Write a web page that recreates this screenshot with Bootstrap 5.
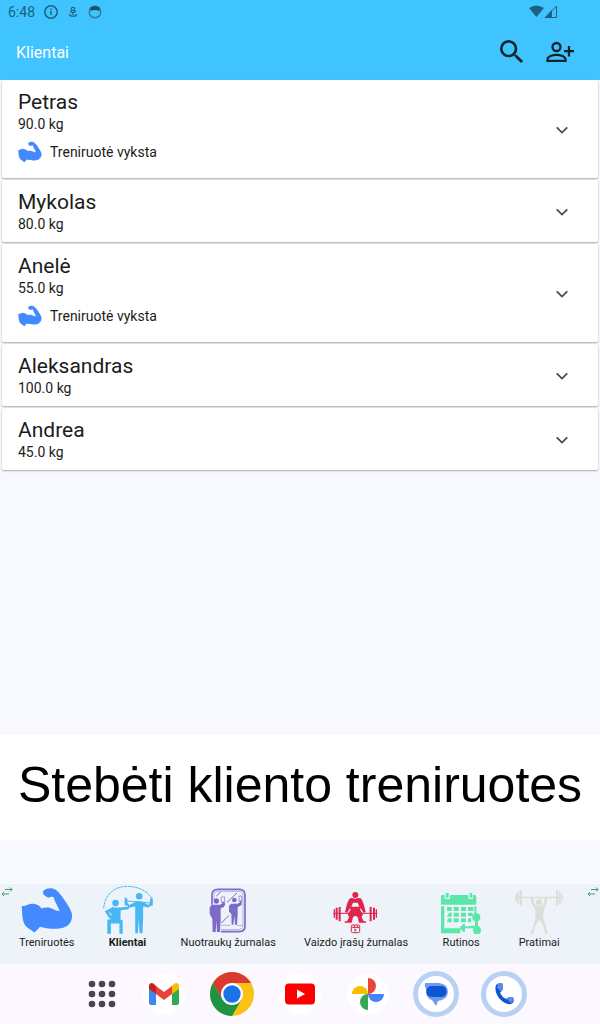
<!DOCTYPE html>
<html lang="lt">
<head>
<meta charset="utf-8">
<meta name="viewport" content="width=device-width, initial-scale=1">
<title>Klientai</title>
<link href="https://cdn.jsdelivr.net/npm/bootstrap@5.3.0/dist/css/bootstrap.min.css" rel="stylesheet">
<style>
  body { font-family: Roboto, sans-serif; background: #f7f9ff; color: #1b1c20; }
  svg { display: block; flex: none; }
  button { color: inherit; }
  .plain-btn { border: 0; background: none; padding: 0; }
  .top-area { background: #40c4ff; }
  .status-row { height: 24px; padding: 0 42px 0 8px; font-size: 14px; line-height: 24px; color: #1c617f; }
  .app-bar { height: 56px; padding: 0 26px 0 16px; gap: 14px; }
  .app-bar h1 { font-size: 16px; line-height: 24px; font-weight: 400; color: #fff; padding-top: 2px; }
  .client-list { display: grid; gap: 2px; padding: 0 2px; }
  .client { border: 0; border-radius: 2px; background: #fff; box-shadow: 0 1px 2px rgba(0,0,0,.32); padding: 10px 24px 8px 16px; }
  .client h2 { font-size: 21px; line-height: 24px; font-weight: 400; }
  .client p { font-size: 14px; line-height: 20px; }
  .client .training { height: 36px; font-size: 14px; }
  .caption-band { background: #fff; height: 105px; margin-bottom: 44px; font-family: "Liberation Sans", Arial, sans-serif; font-size: 50px; line-height: 100px; color: #000; white-space: nowrap; }
  .tab-strip { background: #edf3f8; height: 80px; padding: 3px 19px 0; gap: 28px; }
  .tab-strip .tab-item { min-width: 50px; font-size: 11px; line-height: 18px; white-space: nowrap; }
  .scroll-hint { top: 3px; color: #43996b; }
  .dock { background: #fbf9ff; height: 60px; gap: 24px; padding-left: 12px; }
</style>
</head>
<body class="d-flex flex-column min-vh-100">
<svg width="0" height="0" class="position-absolute" aria-hidden="true">
  <symbol id="muscle" viewBox="64 28 154 136">
    <path fill="#448aff" d="M66 82C75 86 84 75 100 76C112 77 120 82 125 90C135 86 150 86 160 92C168 96 175 99 178 96C174 84 164 72 160 56C155 54 151 55 147 58C138 56 128 50 129 40C133 32 145 29 155 30C165 32 173 38 182 50C192 64 206 82 213 100C219 118 212 136 196 144C176 154 140 150 120 144C116 150 110 156 103 161C92 152 82 148 76 140C66 122 68 100 66 82Z"/>
  </symbol>
  <symbol id="chevron" viewBox="0 0 24 24"><path fill="none" stroke="#4a4b50" stroke-width="1.800" d="M6.700 9.300 12 14.600l5.300-5.300"/></symbol>
  <symbol id="swap" viewBox="0 0 12 10"><path fill="none" stroke="currentColor" d="M4 2.500h7M9 .5l2 2-2 2M8 7H1M3 5 1 7l2 2"/></symbol>
</svg>

<header class="top-area">
  <div class="status-row d-flex align-items-center">
    <span class="me-2">6:48</span>
    <svg width="16" height="16" viewBox="0 0 16 16" fill="none" stroke="#1c617f" stroke-width="1.500"><circle cx="8" cy="8" r="6.200"/><path d="M8 7v4M8 4.500v1.300"/></svg>
    <svg class="ms-2" width="12" height="12" viewBox="0 0 12 12" fill="none" stroke="#1c617f" stroke-width="1.200"><circle cx="6" cy="3" r="1.700"/><path d="M3 5l3 2 3-2M2.500 8c0 3 7 3 7 0M6 7v2"/></svg>
    <svg class="ms-2 me-auto" width="16" height="16" viewBox="0 0 16 16"><circle cx="8" cy="8" r="5.800" fill="none" stroke="#35809f" stroke-width="1.500"/><path fill="#1c5068" d="M3.500 3.500Q8 .5 12.500 3.500V7Q8 5 3.500 7z"/></svg>
    <svg width="16" height="14" viewBox="0 0 16 14"><path fill="#1c617f" d="M1 3Q8-2 16 3L8.500 12z"/></svg>
    <svg width="14" height="14" viewBox="0 0 14 14"><path fill="none" stroke="#1c617f" d="M1 12.500h11.500V1z"/><path fill="#1c617f" d="M1 13h7V5z"/></svg>
  </div>
  <div class="app-bar d-flex align-items-center">
    <h1 class="m-0 me-auto">Klientai</h1>
    <button type="button" class="plain-btn" aria-label="Ieškoti">
      <svg width="32" height="32" viewBox="0 0 24 24"><path fill="#15242b" d="M15.500 14h-.79l-.28-.27A6.470 6.470 0 0 0 16 9.500 6.500 6.500 0 1 0 9.500 16c1.610 0 3.090-.59 4.230-1.570l.27.28v.79l4.800 4.790L20.290 18.800l-4.790-4.800zm-6 0C7.010 14 5 11.990 5 9.500S7.010 5 9.500 5 14 7.010 14 9.500 11.990 14 9.500 14z"/></svg>
    </button>
    <button type="button" class="plain-btn" aria-label="Pridėti klientą">
      <svg width="32" height="32" viewBox="0 0 32 32" fill="none" stroke="#15242b" stroke-width="2.300"><circle cx="14.500" cy="11" r="4"/><path d="M5.500 24.800v-1.600c0-2.500 5-4.400 9-4.400s9 1.900 9 4.400v1.600zM27 10v10.500M22 15.200h10"/></svg>
    </button>
  </div>
</header>

<main class="client-list">
  <section class="client d-flex align-items-center">
    <div class="me-auto"><h2 class="m-0">Petras</h2><p class="m-0">90.0 kg</p>
      <div class="training d-flex align-items-center gap-2"><svg width="24" height="22"><use href="#muscle"/></svg><span>Treniruotė vyksta</span></div></div>
    <button type="button" class="plain-btn" aria-label="Išskleisti: Petras"><svg width="24" height="24"><use href="#chevron"/></svg></button>
  </section>
  <section class="client d-flex align-items-center">
    <div class="me-auto"><h2 class="m-0">Mykolas</h2><p class="m-0">80.0 kg</p></div>
    <button type="button" class="plain-btn" aria-label="Išskleisti: Mykolas"><svg width="24" height="24"><use href="#chevron"/></svg></button>
  </section>
  <section class="client d-flex align-items-center">
    <div class="me-auto"><h2 class="m-0">Anelė</h2><p class="m-0">55.0 kg</p>
      <div class="training d-flex align-items-center gap-2"><svg width="24" height="22"><use href="#muscle"/></svg><span>Treniruotė vyksta</span></div></div>
    <button type="button" class="plain-btn" aria-label="Išskleisti: Anelė"><svg width="24" height="24"><use href="#chevron"/></svg></button>
  </section>
  <section class="client d-flex align-items-center">
    <div class="me-auto"><h2 class="m-0">Aleksandras</h2><p class="m-0">100.0 kg</p></div>
    <button type="button" class="plain-btn" aria-label="Išskleisti: Aleksandras"><svg width="24" height="24"><use href="#chevron"/></svg></button>
  </section>
  <section class="client d-flex align-items-center">
    <div class="me-auto"><h2 class="m-0">Andrea</h2><p class="m-0">45.0 kg</p></div>
    <button type="button" class="plain-btn" aria-label="Išskleisti: Andrea"><svg width="24" height="24"><use href="#chevron"/></svg></button>
  </section>
</main>

<div class="mt-auto">
  <div class="caption-band text-center">Stebėti kliento treniruotes</div>

  <nav class="tab-strip d-flex align-items-start position-relative">
    <svg class="scroll-hint position-absolute start-0" width="14" height="10"><use href="#swap"/></svg>
    <svg class="scroll-hint position-absolute end-0" width="14" height="10"><use href="#swap"/></svg>
    <button type="button" class="plain-btn tab-item">
      <svg class="mx-auto" width="52" height="47"><use href="#muscle"/></svg>Treniruotės
    </button>
    <button type="button" class="plain-btn tab-item fw-bold">
      <svg class="mx-auto" width="50" height="47" viewBox="38 21 152 143" fill="none" stroke="#45b8f5" overflow="visible">
        <path stroke-width="3" stroke-dasharray="9 2" d="M40 86C44 38 78 19 112 19C150 19 176 38 186 54"/>
        <circle cx="76" cy="70" r="10" fill="#45b8f5" stroke="none"/><circle cx="148" cy="49" r="10" fill="#45b8f5" stroke="none"/>
        <path fill="#45b8f5" stroke="none" d="M64 84Q66 81 72 83L90 83L116 81V89L92 92L91 119L98 124V163H88V132H62V163H51V121L60 119L64 104L54 95L64 112L58 117L43 95ZM106 62L118 76L136 67Q148 61 160 67L176 76L187 61L190 66L178 83L160 80V115L158 162H149L147 118L144 162H136V80L116 84L103 67Z"/>
        <path stroke-width="3" d="M104 63L188 70"/><path stroke-width="4" d="M106 53V77M110 55V77M183 56V78M187 54V78"/>
      </svg>Klientai
    </button>
    <button type="button" class="plain-btn tab-item">
      <svg class="mx-auto" width="50" height="47" viewBox="103 31 150 141" fill="none" stroke="#7c6acb">
        <path stroke-width="5" d="M130 84V55Q130 38 148 38H212Q229 38 229 56V148Q229 165 212 165H157"/>
        <path stroke-width="1.500" d="M136 72V57Q136 44 150 44H211Q223 44 223 57V147Q223 158 211 159H158M157 146H185M205 146H223"/>
        <path stroke-width="3" d="M143 58L156 46M175 77L205 49M158 139L181 116"/>
        <circle cx="143" cy="73" r="8" fill="#7c6acb" stroke="none"/><circle cx="197" cy="70" r="7" fill="#7c6acb" stroke="none"/>
        <path fill="#7c6acb" stroke="none" d="M130 84H154L162 80L160 75H166L170 82L166 91L156 95V128L154 166H145L143 132L141 166H132L131 126L123 112V92ZM188 81H206L213 78V73H219V84L207 92V116L205 144H199L197 118L194 144H189L188 112L181 105V87Z"/>
        <path stroke-width="2" d="M158 61H168V77H158zM211 58H219V73H211z"/>
      </svg>Nuotraukų žurnalas
    </button>
    <button type="button" class="plain-btn tab-item">
      <svg class="mx-auto" width="50" height="47" viewBox="104 29 150 141" fill="none" stroke="#df244d">
        <circle cx="177" cy="53" r="9" fill="#df244d" stroke="none"/>
        <path fill="#df244d" stroke="none" fill-rule="evenodd" d="M158 66Q164 58 177 65Q190 58 196 66L202 80L208 104L202 107L193 93L191 97L200 110L196 120L202 132H209V136H188L184 120Q177 112 170 120L166 136H145V132H152L158 120L154 110L163 97L161 93L152 107L146 104L152 80ZM165 88H189L184 76H170Z"/>
        <path stroke-width="3" d="M111 108H243"/><path stroke-width="6" d="M121 91V127M130 89V132M223 89V132M233 91V127"/><path stroke-width="4" d="M114 96V121M240 96V121"/>
        <path stroke-width="3" d="M168 143H186Q190 143 190 147V162Q190 166 186 166H169Q165 166 165 162V147Q165 143 168 143ZM166 150H189M172 144L176 150M181 144L185 150"/><path fill="#df244d" d="M175 154V162L181 158z"/>
      </svg>Vaizdo įrašų žurnalas
    </button>
    <button type="button" class="plain-btn tab-item">
      <svg class="mx-auto" width="50" height="47" viewBox="45 30 150 141" fill="#5ae7a9">
        <path d="M60 57Q60 54 66 54H71V66H87V54H142V66H156V54H161Q166 54 166 59V83H60ZM60 88H70V154H118V169H60ZM160 88H166V112H160zM74 48H83V62H74zM146 48H154V62H146z"/>
        <path d="M78 90H92V102H78zM98 90H113V102H98zM120 90H135V102H120zM141 90H157V102H141zM84 108L92 106V119H78zM98 107H113V119H98zM120 107H135V119H120zM141 107H155V117H141zM81 124H92V136H78zM98 124H113V136H98zM120 124H135V136H120zM141 124H150V136H141z"/>
        <circle cx="166" cy="121" r="12"/><circle cx="168" cy="160" r="12"/><path d="M162 128H171V154H162zM118 147H124V141H132V148H158V154H132V164H124V159H118zM148 146H174V153H148z"/>
      </svg>Rutinos
    </button>
    <button type="button" class="plain-btn tab-item">
      <svg class="mx-auto" width="50" height="47" viewBox="284 32 150 141" fill="#deddd9">
        <path d="M287 61H432V66H287zM301 42H308V87H301zM293 47H299V82H293zM288 52H292V76H288zM410 42H417V87H410zM419 47H424V82H419zM426 52H430V76H426z"/>
        <circle cx="359" cy="78" r="9"/>
        <path d="M333 64L343 63L342 75L349 87Q359 92 369 87L376 76L374 64L383 65V79L375 96L371 122L377 143L384 168L388 172H378L371 146L360 130L348 148L341 172H331L339 160L344 143L349 118L347 97L336 80Z"/>
      </svg>Pratimai
    </button>
  </nav>

  <footer class="dock d-flex align-items-center justify-content-center">
    <button type="button" class="plain-btn" aria-label="Programos"><svg width="32" height="32" viewBox="0 0 32 32" fill="#49454e"><circle cx="6" cy="6" r="3.300"/><circle cx="16" cy="6" r="3.300"/><circle cx="26" cy="6" r="3.300"/><circle cx="6" cy="16" r="3.300"/><circle cx="16" cy="16" r="3.300"/><circle cx="26" cy="16" r="3.300"/><circle cx="6" cy="26" r="3.300"/><circle cx="16" cy="26" r="3.300"/><circle cx="26" cy="26" r="3.300"/></svg></button>
    <button type="button" class="plain-btn" aria-label="Gmail"><svg width="44" height="44" viewBox="0 0 44 44"><circle cx="22" cy="22" r="21" fill="#fff"/><path fill="#4285f4" d="M7 16l7 5v12H9q-2 0-2-2z"/><path fill="#34a853" d="M30 21l7-5v15q0 2-2 2h-5z"/><path fill="#ea4335" d="M14 14l8 6 8-6v8l-8 6-8-6z"/><path fill="#c5221f" d="M7 14c0-3 3-4 5-2l2 2v8l-7-5z"/><path fill="#fbbc04" d="M37 14c0-3-3-4-5-2l-2 2v8l7-5z"/></svg></button>
    <button type="button" class="plain-btn" aria-label="Chrome"><svg width="44" height="44" viewBox="0 0 44 44"><circle cx="22" cy="22" r="22" fill="#fbc116"/><path fill="#d93b30" d="M3 11A22 22 0 0 1 41 11H22L12.500 27.500z"/><path fill="#1e9345" d="M3 11A22 22 0 0 0 22 44L31.500 27.500H12.500z"/><circle cx="22" cy="22" r="11" fill="#fff"/><circle cx="22" cy="22" r="8.700" fill="#1a73e8"/></svg></button>
    <button type="button" class="plain-btn" aria-label="YouTube"><svg width="44" height="44" viewBox="0 0 44 44"><circle cx="22" cy="22" r="21" fill="#fff"/><rect x="7" y="11.500" width="30" height="21" rx="4" fill="#f00"/><path fill="#fff" d="M19 17.500v9l8-4.500z"/></svg></button>
    <button type="button" class="plain-btn" aria-label="Nuotraukos"><svg width="44" height="44" viewBox="0 0 44 44"><circle cx="22" cy="22" r="21" fill="#fff"/><path fill="#e8453c" d="M22 6a8 8 0 0 1 0 16z"/><path fill="#4285f4" d="M38 22a8 8 0 0 1-16 0z"/><path fill="#34a853" d="M22 38a8 8 0 0 1 0-16z"/><path fill="#fbbc04" d="M6 22a8 8 0 0 1 16 0z"/></svg></button>
    <button type="button" class="plain-btn" aria-label="Žinutės"><svg width="44" height="44" viewBox="0 0 44 44" overflow="visible"><circle cx="22" cy="22" r="20.500" fill="#fff" stroke="#b8d0f3" stroke-width="5"/><path fill="#7199ef" d="M11 11H25Q34 12 34 20Q33 28 24 29L22 34L18 28Q11 26 12 17Q10 14 11 11Z"/><rect x="12.500" y="14" width="20" height="11" rx="5" fill="#0b57d0"/></svg></button>
    <button type="button" class="plain-btn" aria-label="Telefonas"><svg width="44" height="44" viewBox="0 0 44 44" overflow="visible"><circle cx="22" cy="22" r="20.500" fill="#fff" stroke="#b8d0f3" stroke-width="5"/><path fill="#0b57d0" d="M14 13q3-3 6-1l1 5-3 4q2 4 6 6l4-2 4 2q0 4-3 5-6 1-12-6-5-7-3-13z"/><path fill="#5c8deb" d="M16 11.500q3-1 5 0v6l-2 2-4-4zM26 25l5 0 1 3-3 3-4-4z"/></svg></button>
  </footer>
</div>
<script src="https://cdn.jsdelivr.net/npm/bootstrap@5.3.0/dist/js/bootstrap.bundle.min.js"></script>
</body>
</html>
